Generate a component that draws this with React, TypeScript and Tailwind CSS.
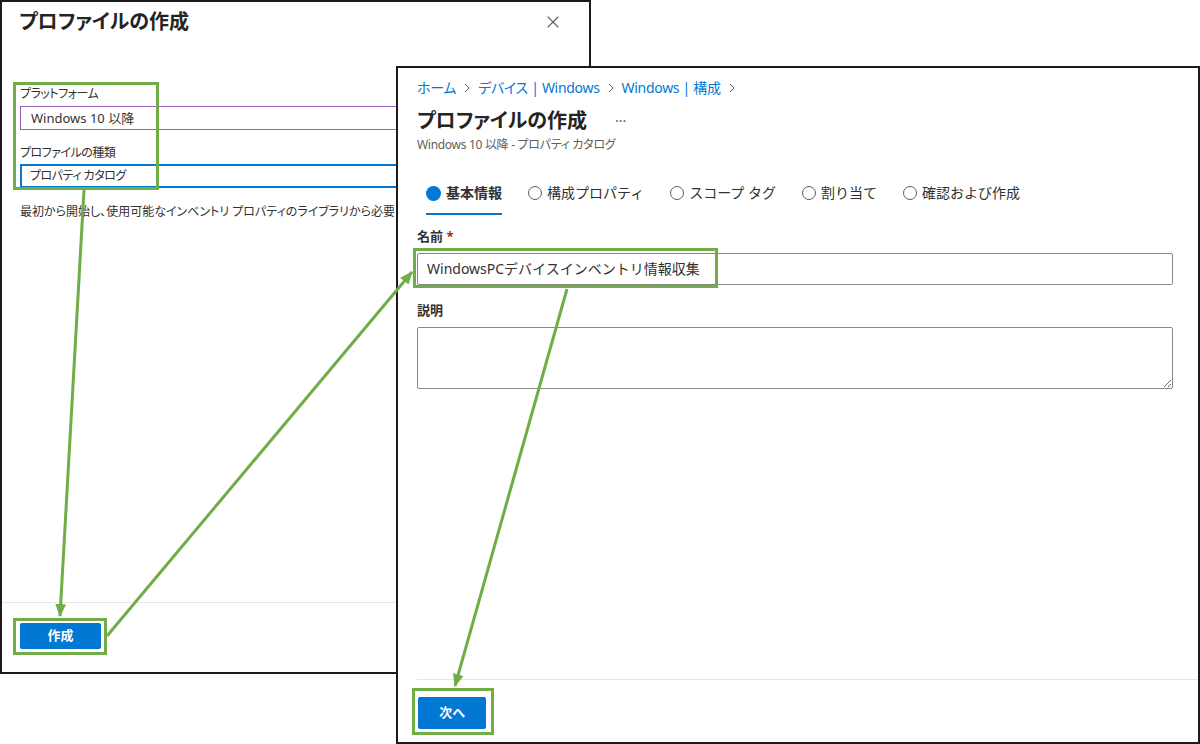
import { X } from "lucide-react";

const tabs = [
  { label: "基本情報", active: true },
  { label: "構成プロパティ", active: false },
  { label: "スコープ タグ", active: false },
  { label: "割り当て", active: false },
  { label: "確認および作成", active: false },
];

const crumbs = ["ホーム", "デバイス | Windows", "Windows | 構成"];

function Chevron() {
  return (
    <svg width="8" height="10" viewBox="0 0 8 10" className="mx-[7px]">
      <path d="M2 1l4 4-4 4" fill="none" stroke="#605e5c" strokeWidth="1" />
    </svg>
  );
}

// green call-outs drawn over both windows
function Annotations() {
  const green = "#70ad47";
  return (
    <svg width="1200" height="744" className="pointer-events-none absolute left-0 top-0">
      <defs>
        <marker id="head" viewBox="0 0 12 10" refX="11" refY="5" markerWidth="13" markerHeight="11" markerUnits="userSpaceOnUse" orient="auto">
          <path d="M0 0L12 5L0 10z" fill={green} />
        </marker>
      </defs>
      <g fill="none" stroke={green} strokeWidth="3">
        <rect x="14.5" y="83.5" width="143" height="105" />
        <rect x="14.5" y="619.5" width="91" height="34" />
        <rect x="414.5" y="249.5" width="302" height="37" />
        <rect x="413.5" y="689.5" width="79" height="44" />
        <line x1="84" y1="190" x2="60" y2="616" markerEnd="url(#head)" />
        <line x1="107" y1="636" x2="412" y2="272" markerEnd="url(#head)" />
        <line x1="567" y1="289" x2="455" y2="686" markerEnd="url(#head)" />
      </g>
    </svg>
  );
}

export default function App() {
  return (
    <div className="relative h-[744px] w-[1200px] overflow-hidden bg-white font-['Noto_Sans','Noto_Sans_CJK_JP',sans-serif] text-[#323130] [font-feature-settings:'palt']">
      {/* first blade */}
      <div className="absolute left-0 top-0 flex h-[674px] w-[591px] flex-col border-2 border-[#1b1b1b] bg-white">
        <div className="flex items-center justify-between pl-[17px] pr-[26px] pt-[6px]">
          <h1 className="text-[20px] font-bold leading-[28px] text-[#252423]">プロファイルの作成</h1>
          <X className="h-[20px] w-[20px] text-[#605e5c]" strokeWidth={1.3} />
        </div>
        <div className="mt-[49px] pl-[18px]">
          <div className="text-[12px] leading-[18px] tracking-[-0.5px]">プラットフォーム</div>
          <div className="mt-[3px] h-[24px] w-[560px] border border-[#9c5fc0] px-[10px] text-[13px] leading-[22px]">Windows 10 以降</div>
          <div className="mt-[14px] text-[12px] leading-[18px] tracking-[-0.5px]">プロファイルの種類</div>
          <div className="mt-[2px] h-[24px] w-[560px] border-2 border-[#0078d4] px-[8px] text-[12px] leading-[20px] tracking-[-0.5px]">プロパティ カタログ</div>
          <p className="mt-[15px] whitespace-nowrap text-[12px] leading-[18px]">
            最初から開始し、使用可能なインベントリ プロパティのライブラリから必要なプロパティを選択します。
          </p>
        </div>
        <div className="mt-auto border-t border-[#e6e6e6] pb-[23px] pl-[18px] pt-[19px]">
          <button className="h-[26px] w-[81px] rounded-[2px] bg-[#0078d4] text-[13px] font-bold text-white">作成</button>
        </div>
      </div>

      {/* second blade */}
      <div className="absolute left-[396px] top-[66px] flex h-[678px] w-[804px] flex-col border-2 border-[#1b1b1b] bg-white">
        <div className="pl-[19px] pr-[25px] pt-[10px]">
          <nav className="flex items-center text-[14px] leading-[20px] tracking-[-0.3px] text-[#0078d4]">
            {crumbs.map((c) => (
              <span key={c} className="flex items-center">
                {c}
                <Chevron />
              </span>
            ))}
          </nav>
          <div className="mt-[9px] flex items-center gap-[28px]">
            <h1 className="text-[20px] font-bold leading-[28px] text-[#252423]">プロファイルの作成</h1>
            <span className="text-[14px] leading-[20px] text-[#605e5c]">···</span>
          </div>
          <div className="mt-[2px] text-[12px] leading-[16px] tracking-[-0.3px] text-[#605e5c]">Windows 10 以降 - プロパティ カタログ</div>

          <div className="mt-[30px] flex gap-[26px] pl-[9px] [font-feature-settings:normal]">
            {tabs.map((t) => (
              <div
                key={t.label}
                className={
                  t.active
                    ? "flex items-center gap-[5px] border-b-2 border-[#0078d4] pb-[10px]"
                    : "flex items-center gap-[5px] border-b-2 border-transparent pb-[10px]"
                }
              >
                <span
                  className={
                    t.active
                      ? "h-[15px] w-[15px] rounded-full bg-[#0078d4]"
                      : "h-[14px] w-[14px] rounded-full border border-[#605e5c]"
                  }
                />
                <span className={t.active ? "text-[14px] font-bold leading-[20px]" : "text-[14px] leading-[20px]"}>{t.label}</span>
              </div>
            ))}
          </div>

          <div className="mt-[12px] text-[13px] font-bold leading-[18px]">
            名前 <span className="text-[#a4262c]">*</span>
          </div>
          <div className="mt-[8px] h-[32px] w-full rounded-[2px] border border-[#8a8886] pl-[9px] text-[14px] leading-[30px] [font-feature-settings:normal]">
            WindowsPCデバイスインベントリ情報収集
          </div>
          <div className="mt-[16px] text-[13px] font-bold leading-[18px]">説明</div>
          <textarea readOnly className="mt-[8px] block h-[62px] w-full rounded-[2px] border border-[#8a8886] outline-none" />
        </div>
        <div className="ml-[19px] mt-auto border-t border-[#e6e6e6] pb-[13px] pt-[17px]">
          <button className="ml-[1px] h-[32px] w-[68px] rounded-[2px] bg-[#0078d4] text-[13px] font-bold text-white">次へ</button>
        </div>
      </div>

      <Annotations />
    </div>
  );
}
